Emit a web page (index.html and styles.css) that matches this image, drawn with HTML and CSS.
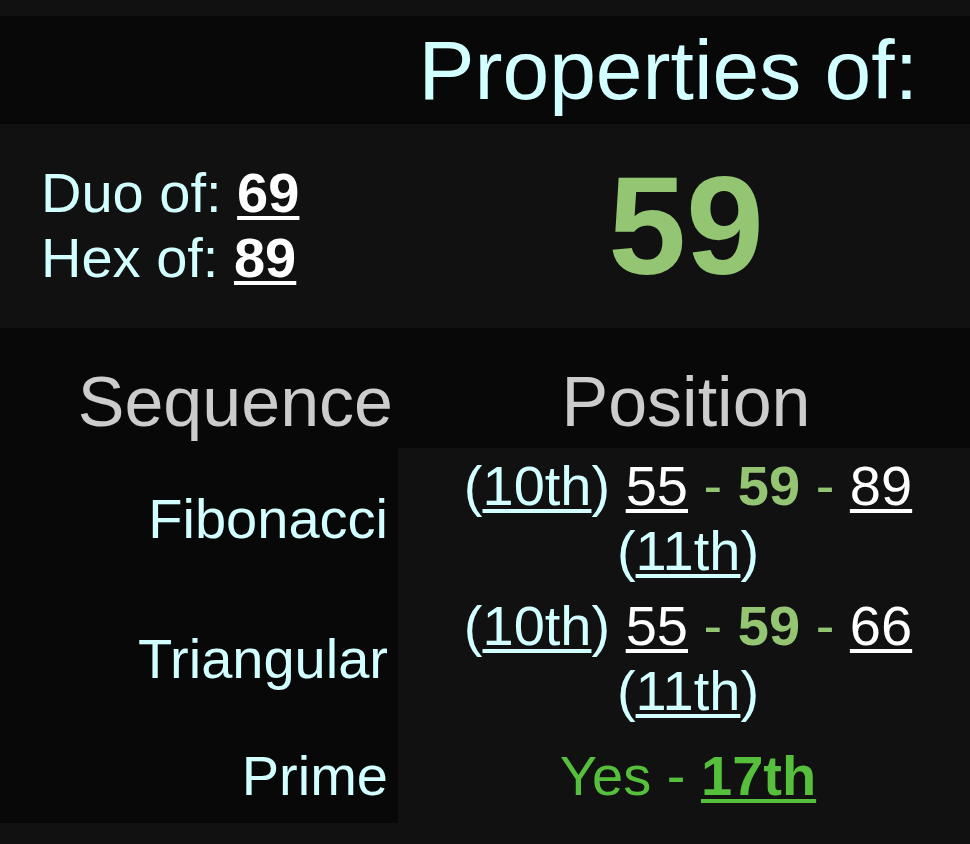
FILE: index.html
```html
<!DOCTYPE html>
<html lang="en">
<head>
<meta charset="utf-8">
<title>Properties of: 59</title>
<link rel="stylesheet" href="styles.css">
</head>
<body>
<main class="props">
  <h1 class="title">Properties of:</h1>
  <div class="aliases">
    <div>Duo of: <a class="alias-link" href="#">69</a></div>
    <div>Hex of: <a class="alias-link" href="#">89</a></div>
  </div>
  <div class="number">59</div>

  <div class="col-head seq">Sequence</div>
  <div class="col-head pos">Position</div>

  <div class="label row-fib">Fibonacci</div>
  <div class="value row-fib">(<a class="ord" href="#">10th</a>) <a class="nb" href="#">55</a> <span class="cur">- <b>59</b> -</span> <a class="nb" href="#">89</a> (<a class="ord" href="#">11th</a>)</div>

  <div class="label row-tri">Triangular</div>
  <div class="value row-tri">(<a class="ord" href="#">10th</a>) <a class="nb" href="#">55</a> <span class="cur">- <b>59</b> -</span> <a class="nb" href="#">66</a> (<a class="ord" href="#">11th</a>)</div>

  <div class="label row-prime">Prime</div>
  <div class="value row-prime prime">Yes - <a class="prime-link" href="#">17th</a></div>
</main>
</body>
</html>
```

FILE: styles.css
```css
html, body {
  background: #111111;
}

body {
  margin: 16px 0 21px 0;
  font-family: "Liberation Sans", Arial, Helvetica, sans-serif;
  font-size: 14px;
  color: #d2ffff;
}

a {
  text-decoration: underline;
  text-decoration-thickness: 4px;
  text-underline-offset: 4px;
}

.props {
  display: grid;
  grid-template-columns: 398px 1fr;
  grid-template-rows: 108px 204px 120px 140px 140px 95px;
}

.title {
  grid-column: 1 / 3;
  margin: 0;
  background: #080808;
  font-size: 84px;
  font-weight: normal;
  color: #d2ffff;
  padding-right: 52px;
  display: flex;
  align-items: center;
  justify-content: flex-end;
}

.aliases {
  font-size: 56px;
  padding-left: 41px;
  display: flex;
  flex-direction: column;
  justify-content: center;
  padding-bottom: 3px;
}

.alias-link {
  color: #ffffff;
  font-weight: bold;
}

.number {
  font-size: 140px;
  font-weight: bold;
  color: #93c572;
  display: flex;
  align-items: center;
  justify-content: center;
  padding-left: 4px;
}

.col-head {
  background: #080808;
  font-size: 70px;
  color: #cccccc;
  display: flex;
  align-items: flex-end;
  padding-bottom: 6px;
}

.col-head.seq {
  justify-content: flex-end;
  padding-right: 5px;
}

.col-head.pos {
  justify-content: center;
  padding-left: 4px;
}

.label {
  background: #080808;
  font-size: 56px;
  display: flex;
  align-items: center;
  justify-content: flex-end;
  padding-right: 10px;
}

.value {
  font-size: 56px;
  text-align: center;
  align-self: center;
  padding: 0 6px 0 14px;
}

.ord {
  color: #d2ffff;
}

.nb {
  color: #ffffff;
}

.cur {
  color: #93c572;
}

.prime {
  color: #56c03d;
}

.prime-link {
  color: #56c03d;
  font-weight: bold;
}
```
